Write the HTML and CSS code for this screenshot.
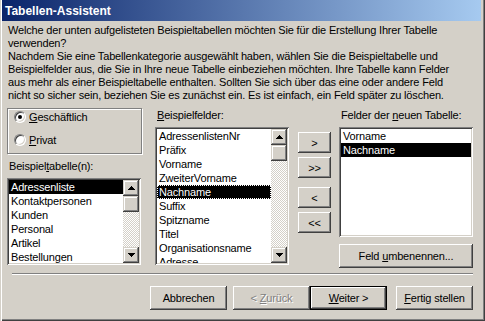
FILE: index.html
```html
<!DOCTYPE html>
<html lang="de">
<head>
    <meta charset="UTF-8">
    <meta name="viewport" content="width=device-width, initial-scale=1.0">
    <title>Tabellen-Assistent</title>
    <link rel="stylesheet" href="styles.css">
</head>
<body>
    <div class="window">
        <div class="titlebar">Tabellen-Assistent</div>

        <div class="content">
            <p class="intro">
                Welche der unten aufgelisteten Beispieltabellen möchten Sie für die Erstellung Ihrer Tabelle<br>
                verwenden?<br>
                Nachdem Sie eine Tabellenkategorie ausgewählt haben, wählen Sie die Beispieltabelle und<br>
                Beispielfelder aus, die Sie in Ihre neue Tabelle einbeziehen möchten. Ihre Tabelle kann Felder<br>
                aus mehr als einer Beispieltabelle enthalten. Sollten Sie sich über das eine oder andere Feld<br>
                nicht so sicher sein, beziehen Sie es zunächst ein. Es ist einfach, ein Feld später zu löschen.
            </p>

            <div class="main">
                <!-- Kategorie + Beispieltabellen -->
                <div class="col col-tables">
                    <div class="group">
                        <label class="radio-row"><span class="radio checked"></span><span><u>G</u>eschäftlich</span></label>
                        <label class="radio-row"><span class="radio"></span><span><u>P</u>rivat</span></label>
                    </div>
                    <div class="field-label label-tables">Beispiel<u>t</u>abelle(n):</div>
                    <div class="listbox list-tables">
                        <ul class="items">
                            <li class="selected">Adressenliste</li>
                            <li>Kontaktpersonen</li>
                            <li>Kunden</li>
                            <li>Personal</li>
                            <li>Artikel</li>
                            <li>Bestellungen</li>
                        </ul>
                        <div class="scrollbar">
                            <span class="sb-btn"><svg width="7" height="4"><path d="M3 0h1v1h1v1h1v1h1v1H0V3h1V2h1V1h1z"/></svg></span>
                            <span class="sb-thumb"></span>
                            <span class="sb-track"></span>
                            <span class="sb-btn"><svg width="7" height="4"><path d="M0 0h7v1H6v1H5v1H4v1H3V3H2V2H1V1H0z"/></svg></span>
                        </div>
                    </div>
                </div>

                <!-- Beispielfelder -->
                <div class="col col-fields">
                    <div class="field-label"><u>B</u>eispielfelder:</div>
                    <div class="listbox list-fields">
                        <ul class="items">
                            <li>AdressenlistenNr</li>
                            <li>Präfix</li>
                            <li>Vorname</li>
                            <li>ZweiterVorname</li>
                            <li class="selected focus">Nachname</li>
                            <li>Suffix</li>
                            <li>Spitzname</li>
                            <li>Titel</li>
                            <li>Organisationsname</li>
                            <li>Adresse</li>
                        </ul>
                        <div class="scrollbar">
                            <span class="sb-btn"><svg width="7" height="4"><path d="M3 0h1v1h1v1h1v1h1v1H0V3h1V2h1V1h1z"/></svg></span>
                            <span class="sb-thumb"></span>
                            <span class="sb-track"></span>
                            <span class="sb-btn"><svg width="7" height="4"><path d="M0 0h7v1H6v1H5v1H4v1H3V3H2V2H1V1H0z"/></svg></span>
                        </div>
                    </div>
                </div>

                <!-- Verschieben -->
                <div class="col col-move">
                    <button class="btn move-btn">&gt;</button>
                    <button class="btn move-btn">&gt;&gt;</button>
                    <button class="btn move-btn move-gap">&lt;</button>
                    <button class="btn move-btn">&lt;&lt;</button>
                </div>

                <!-- Neue Tabelle -->
                <div class="col col-new">
                    <div class="field-label">Felder der <u>n</u>euen Tabelle:</div>
                    <div class="listbox list-new">
                        <ul class="items">
                            <li>Vorname</li>
                            <li class="selected">Nachname</li>
                        </ul>
                    </div>
                    <button class="btn rename-btn">Feld <u>u</u>mbenennen...</button>
                </div>
            </div>

            <div class="separator"></div>

            <div class="footer">
                <button class="btn footer-btn cancel">Abbrechen</button>
                <button class="btn footer-btn disabled">&lt; <u>Z</u>urück</button>
                <button class="btn footer-btn default"><u>W</u>eiter &gt;</button>
                <button class="btn footer-btn"><u>F</u>ertig stellen</button>
            </div>
        </div>
    </div>
</body>
</html>
```

FILE: styles.css
```css
body {
    margin: 0;
    background: #d4d0c8;
    font-family: 'Liberation Sans', Arial, sans-serif;
    font-size: 11px;
    letter-spacing: -0.17px;
    color: #000;
}

.window {
    width: 485px;
    height: 321px;
    box-sizing: border-box;
    background: #d4d0c8;
    box-shadow: inset 1px 0 #d4d0c8, inset 2px 0 #fff,
        inset -1px -1px #404040, inset -2px -2px #808080;
    overflow: hidden;
}

.titlebar {
    height: 21px;
    margin: 0 4px 0 2px;
    padding: 2px 0 0 3px;
    box-sizing: border-box;
    line-height: 19px;
    font-size: 12px;
    font-weight: bold;
    letter-spacing: 0;
    color: white;
    background: linear-gradient(to right, #0a246a, #a6caf0);
}

.content {
    padding: 3px 12px 0 7px;
}

.intro {
    margin: 0 0 0 1px;
    line-height: 13px;
    white-space: nowrap;
}

u {
    text-decoration: underline;
    text-underline-offset: 1px;
}

.main {
    display: flex;
    align-items: flex-start;
    margin-top: 6px;
    height: 160px;
}

.col {
    display: flex;
    flex-direction: column;
}

.col-tables {
    width: 135px;
}

.col-fields {
    width: 134px;
    margin-left: 13px;
}

.col-move {
    width: 33px;
    margin-left: 9px;
    padding-top: 24px;
}

.col-new {
    width: 134px;
    margin-left: 8px;
}

/* Gruppenrahmen mit Optionsfeldern */
.group {
    border: 1px solid #808080;
    box-shadow: 1px 1px 0 #fff, inset 1px 1px 0 #fff;
    padding: 1px 0 6px 6px;
    display: flex;
    flex-direction: column;
    gap: 9px;
    box-sizing: border-box;
    height: 46px;
}

.radio-row {
    display: flex;
    align-items: center;
    height: 14px;
    line-height: 14px;
}

.radio {
    width: 12px;
    height: 12px;
    box-sizing: border-box;
    border-radius: 50%;
    border: 1px solid;
    border-color: #808080 #fff #fff #808080;
    box-shadow: inset 1px 1px #404040, inset -1px -1px #d4d0c8;
    background: #fff;
    margin-right: 3px;
    position: relative;
}

.radio.checked::after {
    content: '';
    position: absolute;
    left: 3px;
    top: 3px;
    width: 4px;
    height: 4px;
    border-radius: 50%;
    background: #000;
}

.field-label {
    height: 14px;
    line-height: 14px;
    padding-left: 2px;
    white-space: nowrap;
}

.label-tables {
    margin-top: 5px;
}

/* Listenfelder */
.listbox {
    display: flex;
    margin-top: 5px;
    padding: 2px;
    box-sizing: border-box;
    background: #fff;
    box-shadow: inset 1px 1px #808080, inset -1px -1px #fff,
        inset 2px 2px #404040, inset -2px -2px #d4d0c8;
}

.list-tables {
    width: 134px;
    height: 87px;
}

.list-fields {
    width: 134px;
    height: 138px;
}

.list-new {
    width: 134px;
    height: 110px;
}

.items {
    flex: 1;
    list-style: none;
    margin: 0;
    padding: 0;
    overflow: hidden;
}

.items li {
    height: 14px;
    line-height: 14px;
    padding-left: 2px;
    white-space: nowrap;
}

.items li.selected {
    background: #000;
    color: #fff;
}

.items li.focus {
    outline: 1px dotted #fff;
    outline-offset: -1px;
}

.scrollbar {
    width: 16px;
    display: flex;
    flex-direction: column;
}

.sb-btn,
.sb-thumb {
    flex: none;
    height: 16px;
    background: #d4d0c8;
    box-shadow: inset -1px -1px #404040, inset 1px 1px #d4d0c8,
        inset -2px -2px #808080, inset 2px 2px #fff;
}

.sb-btn {
    display: flex;
    align-items: center;
    justify-content: center;
}

.sb-btn svg {
    display: block;
}

.sb-track {
    flex: 1;
    background-image: conic-gradient(#fff 25%, #d4d0c8 0 50%, #fff 0 75%, #d4d0c8 0);
    background-size: 2px 2px;
}

/* Schaltflächen */
.btn {
    font-family: inherit;
    font-size: 11px;
    letter-spacing: inherit;
    color: #000;
    padding: 0;
    border: none;
    background: #d4d0c8;
    box-shadow: inset -1px -1px #404040, inset 1px 1px #fff,
        inset -2px -2px #808080;
    cursor: pointer;
    box-sizing: border-box;
}

.move-btn {
    width: 33px;
    height: 21px;
    margin-bottom: 4px;
}

.move-btn.move-gap {
    margin-top: 5px;
}

.rename-btn {
    width: 134px;
    height: 24px;
    margin-top: 7px;
}

.separator {
    margin: 5px 0 0 5px;
    border-top: 1px solid #808080;
    border-bottom: 1px solid #fff;
}

.footer {
    display: flex;
    justify-content: flex-end;
    margin-top: 11px;
}

.footer-btn {
    width: 77px;
    height: 24px;
}

.footer-btn.cancel {
    margin-right: 6px;
}

.footer-btn.default {
    border: 1px solid #000;
    margin-right: 9px;
}

.footer-btn.disabled {
    color: #808080;
    text-shadow: 1px 1px #fff;
    cursor: default;
}
```
